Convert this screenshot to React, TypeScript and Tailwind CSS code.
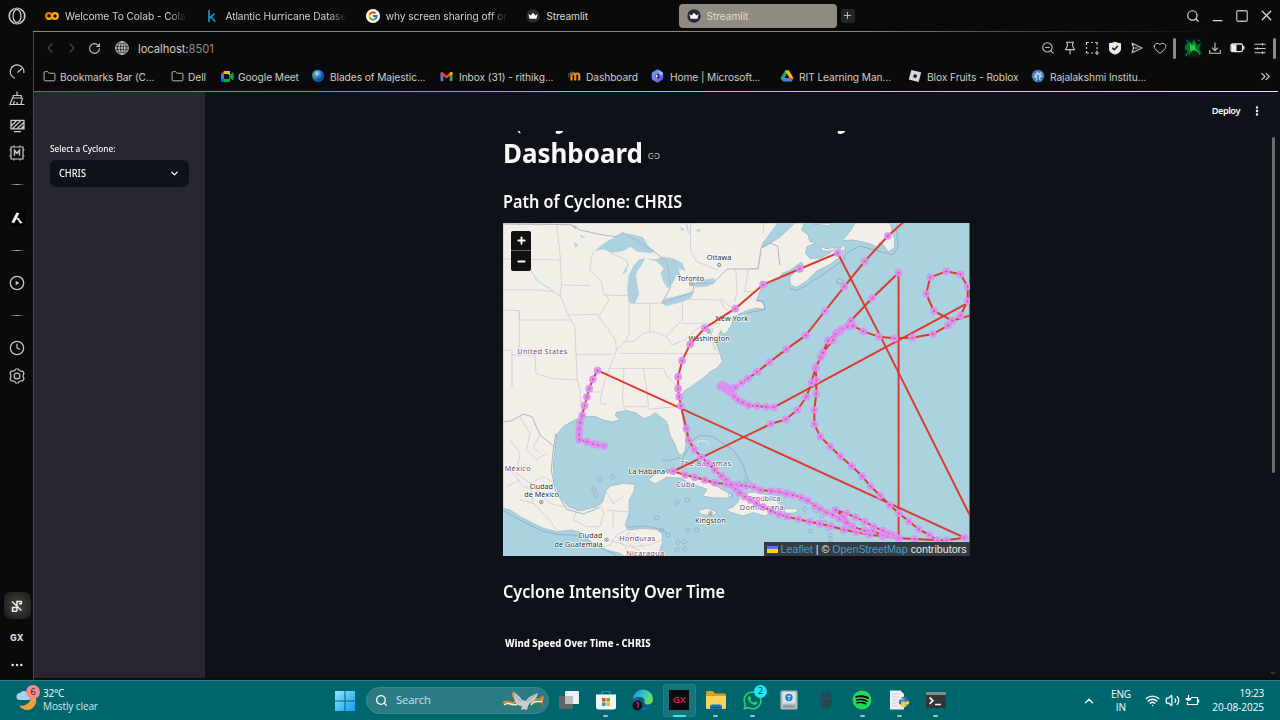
import React from "react";
import {
  Search, Minus, Square, X, ChevronLeft, ChevronRight, RotateCw, ZoomOut, Heart,
  ChevronsRight, ChevronDown, ChevronUp, MoreVertical, Folder, Clock, Wifi, Volume2, Plus,
} from "lucide-react";
import { FaSpotify, FaWhatsapp, FaPython } from "react-icons/fa";
import { FcGoogle } from "react-icons/fc";

type Pt = [number, number];

/* ---------- Brand marks ---------- */

const Colab = () => (
  <svg width="14" height="10" viewBox="0 0 28 20" fill="none" strokeWidth="4.6">
    <circle cx="8" cy="10" r="5.6" stroke="#e8710a" />
    <circle cx="20" cy="10" r="5.6" stroke="#f9ab00" />
    <path d="M4 14a5.6 5.6 0 0 0 8 0" stroke="#f9ab00" />
  </svg>
);

const Kaggle = () => (
  <svg width="14" height="14" viewBox="0 0 14 14" fill="none" stroke="#1f8fc0" strokeWidth="1.7">
    <path d="M4 1v12M9.6 4.6 4.6 9M6.2 7.8l4 5" />
  </svg>
);

const Crown = () => (
  <svg width="14" height="14" viewBox="0 0 14 14">
    <circle cx="7" cy="7" r="6.7" fill="#262a35" />
    <path d="M2.4 5l2.2 1.5L7 3.8l2.4 2.7L11.6 5l-1.2 4.8H3.6z" fill="#fff" />
  </svg>
);

const Meet = () => (
  <svg width="14" height="13" viewBox="0 0 28 26">
    <path d="M2 8 8 2v6z" fill="#ea4335" />
    <path d="M8 2h12v8h-3V8H8z" fill="#fbbc04" />
    <path d="M2 8h6v10H2z" fill="#2684fc" />
    <path d="M2 18h6v6H4a2 2 0 0 1-2-2z" fill="#0066da" />
    <path d="M8 18h9l3-4v8a2 2 0 0 1-2 2H8z" fill="#00ac47" />
    <path d="M18 12l7-7c1-1 2 0 2 1v13c0 1-1 2-2 1l-7-6z" fill="#00ac47" />
  </svg>
);

const Marble = () => (
  <svg width="14" height="14" viewBox="0 0 14 14">
    <defs>
      <radialGradient id="marble" cx=".4" cy=".3">
        <stop offset="0" stopColor="#bfe6ff" />
        <stop offset=".5" stopColor="#3b8ee8" />
        <stop offset="1" stopColor="#174ba8" />
      </radialGradient>
    </defs>
    <circle cx="7" cy="7" r="6.2" fill="url(#marble)" />
    <path d="M1.500 6 3 3l1.500 2L4 8l1 3-2-1z" fill="#5c9e3b" fillOpacity=".8" />
  </svg>
);

const Gmail = () => (
  <svg width="13" height="11" viewBox="0 0 26 20">
    <path d="M1 4v14a1.500 1.500 0 0 0 1.500 1.500H6.500V8z" fill="#4285f4" />
    <path d="M25 4v14a1.500 1.500 0 0 1-1.500 1.500H19.500V8z" fill="#34a853" />
    <path d="M1 3c0-2 2-3 4-1.500L13 8l8-6.500C23 0 25 1 25 3v2L13 14 1 5z" fill="#ea4335" />
    <path d="M19.500 9V3C22 0 25 1 25 3v2z" fill="#fbbc04" />
  </svg>
);

const Moodle = () => (
  <svg width="13" height="10" viewBox="0 0 26 20" fill="none">
    <path d="M7 19V4M7 9a3.700 3.700 0 0 1 7.500 0v10M14.500 9a4 4 0 0 1 8 0v10" stroke="#f08a24" strokeWidth="4.400" />
    <path d="M0 5 9 1l6 2-7 4z" fill="#5b5b5b" />
    <path d="M1.500 5v8" stroke="#777" strokeWidth="1.500" />
  </svg>
);

const M365 = () => (
  <svg width="13" height="14" viewBox="0 0 26 28">
    <defs>
      <linearGradient id="m365" x1="0" y1="0" x2="1" y2="1">
        <stop offset="0" stopColor="#4aa5f5" />
        <stop offset=".45" stopColor="#8f7cf0" />
        <stop offset="1" stopColor="#3f5fe0" />
      </linearGradient>
    </defs>
    <path d="M13 5 20.500 9.500v9L13 23l-7.500-4.500v-9z" fill="none" stroke="url(#m365)" strokeWidth="8" strokeLinejoin="round" />
    <path d="M15 2l8 5v6l-6-3z" fill="#6fd0f2" />
    <path d="M10 11v7l5-4z" fill="#eef" />
  </svg>
);

const Drive = () => (
  <svg width="14" height="12" viewBox="0 0 28 24">
    <path d="M10 1h8l-4 7-8 14-5-6z" fill="#1fa463" />
    <path d="M10 1h8l9 15h-8z" fill="#fbbc04" />
    <path d="M1 16h26l-4 7H6z" fill="#4285f4" />
    <path d="M19 16h8l-4 7z" fill="#ea4335" />
    <path d="M14 9l4 7h-8z" fill="#0a0a0a" />
  </svg>
);

const Roblox = () => (
  <svg width="14" height="14" viewBox="0 0 14 14">
    <path d="M3.300 1 13.200 3.300 10.700 13 .8 10.500z" fill="#d3d7de" />
    <path d="M6 5.300l3 .8-.8 2.900-3-.8z" fill="#15171c" />
  </svg>
);

const College = () => (
  <svg width="14" height="14" viewBox="0 0 14 14">
    <circle cx="7" cy="7" r="6.300" fill="#3b78b8" />
    <path d="M3 4l2 1 1-3 2 2 3-1-1 3 2 1-3 2 1 3-3-2-2 3V9L2 8l2-2z" fill="#a9cdec" />
    <path d="M7 6v7" stroke="#1d3f6e" />
  </svg>
);

const FolderIcon = () => <Folder size={13} strokeWidth={1.700} className="text-[#c9c9c5]" />;

/* ---------- Window chrome ---------- */

const tabs = [
  { icon: <Colab />, text: "Welcome To Colab - Colab" },
  { icon: <Kaggle />, text: "Atlantic Hurricane Datase" },
  { icon: <FcGoogle size={14} className="rounded-full bg-white p-[1.500px]" />, text: "why screen sharing off on" },
  { icon: <Crown />, text: "Streamlit" },
  { icon: <Crown />, text: "Streamlit", active: true },
];

function TabBar() {
  return (
    <div className="flex h-[31px] shrink-0 items-center">
      <div className="flex w-[34px] shrink-0 justify-center">
        <svg width="18" height="18" viewBox="0 0 18 18" fill="none" stroke="#d6d3ca" strokeWidth="1.200">
          <circle cx="9" cy="9" r="8" />
          <ellipse cx="9" cy="9" rx="4" ry="6.600" />
          <path d="M6 2.500a7 7 0 0 0 0 13M12 2.500a7 7 0 0 1 0 13" strokeWidth=".9" />
        </svg>
      </div>
      <div className="ml-[3px] flex gap-[2.400px]">
        {tabs.map((t, i) => (
          <div key={i} className={t.active ? "flex h-6 w-[158px] items-center rounded bg-[#8f8b83] px-2" : "flex h-6 w-[158px] items-center px-2"}>
            <span className="flex w-[14px] shrink-0 justify-center">{t.icon}</span>
            <span
              className={
                i < 3
                  ? "ml-[6px] w-[124px] shrink-0 whitespace-nowrap pt-px text-[10.200px] leading-4 tracking-[-0.080px] text-[#d3d1cb] [mask-image:linear-gradient(to_right,#000_84%,transparent_98%)]"
                  : "ml-[6px] whitespace-nowrap pt-px text-[10.200px] leading-4 tracking-[-0.080px] text-[#dddbd6]"
              }
            >
              {t.text}
            </span>
          </div>
        ))}
      </div>
      <div className="ml-1 flex size-[14px] items-center justify-center rounded-[3px] bg-[#242424] text-[#c9c7c0]">
        <Plus size={11} strokeWidth={2} />
      </div>
      <div className="ml-auto flex items-center text-[#dedbd2]">
        <span className="flex w-[24px] justify-center"><Search size={14} strokeWidth={2} /></span>
        <span className="flex w-[25px] justify-center pt-[10px]"><Minus size={15} strokeWidth={2} /></span>
        <span className="flex w-[24px] justify-center"><Square size={14} strokeWidth={2.200} className="text-[#b5b2a8]" /></span>
        <span className="mr-[2px] flex w-[24px] justify-center"><X size={17} strokeWidth={1.800} /></span>
      </div>
    </div>
  );
}

const Slot = ({ children }: { children: React.ReactNode }) => (
  <span className="flex w-[22.400px] shrink-0 items-center justify-center">{children}</span>
);

function AddressBar() {
  return (
    <div className="flex h-[31px] items-center pt-px text-[#c9c6bd]">
      <span className="ml-[5px] flex w-[22px] justify-center text-[#4c4b48]"><ChevronLeft size={16} strokeWidth={1.600} /></span>
      <span className="flex w-[22px] justify-center text-[#4c4b48]"><ChevronRight size={16} strokeWidth={1.600} /></span>
      <span className="flex w-[22px] justify-center"><RotateCw size={13} strokeWidth={2} /></span>
      <span className="ml-[9px] flex w-[16px] justify-center">
        <svg width="14" height="14" viewBox="0 0 14 14" fill="none" stroke="#cfccc4" strokeWidth="1">
          <circle cx="7" cy="7" r="6.300" />
          <ellipse cx="7" cy="7" rx="3" ry="6.300" />
          <path d="M7 .7v12.600M.7 7h12.600M1.500 4h11M1.500 10h11" />
        </svg>
      </span>
      <span className="ml-2 pt-px text-[11.200px] leading-4 tracking-[-0.050px] text-[#cfcdc7]">localhost:<span className="text-[#8f8d88]">8501</span></span>
      <div className="ml-auto flex items-center">
        <Slot><ZoomOut size={14} strokeWidth={1.800} /></Slot>
        <Slot>
          <svg width="12" height="14" viewBox="0 0 12 14" fill="none" stroke="currentColor" strokeWidth="1.100">
            <path d="M2 1.200h8M3.300 1.200v4L1.500 8.600h9L8.700 5.200v-4M6 8.600v4.800" />
          </svg>
        </Slot>
        <Slot>
          <svg width="14" height="14" viewBox="0 0 14 14" fill="none" stroke="currentColor" strokeWidth="1.200">
            <path d="M1.500 4V1.500H4M6 1.500h2M10 1.500h2V4M12 6v2M1.500 6v2M1.500 10v2H4M6 12h2M12 9.500V14M9.700 12H14" />
          </svg>
        </Slot>
        <Slot>
          <svg width="14" height="14" viewBox="0 0 14 14">
            <path d="M1 2.200Q4 2 7 .8q3 1.200 6 1.400V8c0 3-3 4.600-6 5.600C4 12.600 1 11 1 8z" fill="#ece9df" />
            <path d="M4.200 6.800l2 2 3.700-3.800" fill="none" stroke="#111" strokeWidth="1.300" />
          </svg>
        </Slot>
        <Slot>
          <svg width="12" height="12" viewBox="0 0 12 12" fill="none" stroke="currentColor" strokeWidth="1.100" strokeLinejoin="round">
            <path d="M1 1.200 11 6 1 10.800l1.500-4.800zM2.500 6H7" />
          </svg>
        </Slot>
        <Slot><Heart size={14} strokeWidth={1.700} /></Slot>
        <span className="ml-[2px] h-[21px] w-[3px] rounded-sm bg-[#8f8b83]" />
        <span className="ml-2 mr-[2px] flex">
          <svg width="18" height="20" viewBox="0 0 18 20">
            <rect width="18" height="20" rx="3" fill="#07160c" />
            <path d="M1 8l4-5 2 3 3-5 3 6 4-2-2 6 3 5-5-2-2 4-3-3-4 3 1-5-4-1z" fill="#0b6d2b" />
            <path d="M6 4l2 4 2-3 2 7-3 3-3-4z" fill="#25c94f" />
            <path d="M9 12l4 2 1 5H5z" fill="#08240f" />
            <path d="M2 18c1-4 3-5 5-6M12 11l4 6" stroke="#27b84c" fill="none" />
            <path d="M2 2l3 2M14 3l2-1" stroke="#2466a5" />
          </svg>
        </span>
        <Slot>
          <svg width="12" height="12" viewBox="0 0 12 12" fill="none" stroke="currentColor" strokeWidth="1.100">
            <path d="M6 .5v8M3 5.700l3 3 3-3M.7 8v3.200h10.600V8" />
          </svg>
        </Slot>
        <Slot>
          <svg width="15" height="10" viewBox="0 0 15 10">
            <rect x="1" y="1" width="11.500" height="7.600" rx="1.500" fill="none" stroke="#e4e1d8" strokeWidth="1.300" />
            <path d="M1.500 1.500H6.500v7h-5z" fill="#f4f1e8" />
            <path d="M13.700 3v3.600" stroke="#e4e1d8" strokeWidth="1.400" />
          </svg>
        </Slot>
        <Slot>
          <svg width="12" height="11" viewBox="0 0 12 11" stroke="currentColor" strokeWidth="1.100">
            <path d="M.5 1.200h11M.5 5.500h11M.5 9.800h11M8.500 0v2.400M3.500 4.300v2.400M8.500 8.600V11" />
          </svg>
        </Slot>
        <span className="ml-[2px] mr-[4px] h-[21px] w-[3px] rounded-sm bg-[#8f8b83]" />
      </div>
    </div>
  );
}

const bookmarks = [
  { icon: <FolderIcon />, text: "Bookmarks Bar (C...", cls: "w-[128px] gap-[4px]" },
  { icon: <FolderIcon />, text: "Dell", cls: "w-[49px] gap-[4px]" },
  { icon: <Meet />, text: "Google Meet", cls: "w-[91px] gap-[4px]" },
  { icon: <Marble />, text: "Blades of Majestic...", cls: "w-[129px] gap-[5px]" },
  { icon: <Gmail />, text: "Inbox (31) - rithikg...", cls: "w-[128px] gap-[6px]" },
  { icon: <Moodle />, text: "Dashboard", cls: "w-[83px] gap-[5px]" },
  { icon: <M365 />, text: "Home | Microsoft...", cls: "w-[129px] gap-[6px]" },
  { icon: <Drive />, text: "RIT Learning Man...", cls: "w-[128px] gap-[5px]" },
  { icon: <Roblox />, text: "Blox Fruits - Roblox", cls: "w-[123px] gap-[5px]" },
  { icon: <College />, text: "Rajalakshmi Institu...", cls: "w-[130px] gap-[5px]" },
];

function Bookmarks() {
  return (
    <div className="flex h-[28px] items-center pb-[2px] pl-[9px] text-[10.200px] leading-4 tracking-[-0.080px] text-[#d0cec8]">
      {bookmarks.map((b) => (
        <div key={b.text} className={`flex shrink-0 items-center whitespace-nowrap ${b.cls}`}>
          <span className="shrink-0">{b.icon}</span>
          <span className="pt-px">{b.text}</span>
        </div>
      ))}
      <ChevronsRight size={15} strokeWidth={1.700} className="ml-auto mr-[7px]" />
    </div>
  );
}

const Divider = () => <span className="h-px w-4 bg-linear-to-r from-transparent via-[#b5b2aa] to-transparent" />;

const rail: { h: string; el: React.ReactNode }[] = [
  {
    h: "h-[27px]",
    el: (
      <svg width="16" height="16" viewBox="0 0 16 16" fill="none" stroke="currentColor" strokeWidth="1.200">
        <path d="M6 14.200A6.800 6.800 0 1 1 14.800 9M8.500 8.500 13 4.500" />
      </svg>
    ),
  },
  {
    h: "h-[27px]",
    el: (
      <svg width="16" height="15" viewBox="0 0 16 15" fill="none" stroke="currentColor" strokeWidth="1.200">
        <path d="M8 .5v3.500M4.200 7V4.500h8V7M2.800 7h10.600M3.500 7 1 13.500h11L13.400 7M4.500 13l1-3M8 13.300V11M12.500 13.500h3" />
      </svg>
    ),
  },
  {
    h: "h-[27px]",
    el: (
      <svg width="15" height="14" viewBox="0 0 15 14" fill="none" stroke="currentColor" strokeWidth="1.300">
        <path d="M1 1.300h13v8.500H1zM1 7l6-5.700M2.500 9.500 11 1.500M7 9.800l7-6.500M11 9.800l3-3M4 12.700h7" />
      </svg>
    ),
  },
  {
    h: "h-[27px]",
    el: (
      <svg width="16" height="16" viewBox="0 0 16 16" fill="none" stroke="currentColor" strokeWidth="1.200">
        <path d="M2 2h12v12H2zM.5 5H2M.5 11H2M14 5h1.500M14 11h1.500M5 .5V2M11 .5V2M5 14v1.500M11 14v1.500" />
        <path d="M5.500 10.800V5.300L8 8.300l2.500-3v5.500" strokeWidth="1.400" />
      </svg>
    ),
  },
  { h: "h-[37px]", el: <Divider /> },
  {
    h: "h-[30px]",
    el: (
      <span className="flex size-4 items-center justify-center rounded-sm bg-black">
        <svg width="12" height="12" viewBox="0 0 12 12" fill="#f3f1ea">
          <path d="M5.500 .5 8.300 1.300 3.200 11.300 .4 10.300zM6.300 5.500 9 7l-1 1.500-2.500-1zM8.200 7.500l3.300 3-2 1.200-2.500-3z" />
        </svg>
      </span>
    ),
  },
  { h: "h-[34px]", el: <Divider /> },
  {
    h: "h-[32px]",
    el: (
      <svg width="16" height="16" viewBox="0 0 16 16" fill="none" stroke="currentColor" strokeWidth="1.300">
        <circle cx="8" cy="8" r="6.700" />
        <path d="M6.700 5.800 10.300 8l-3.600 2.200z" fill="currentColor" stroke="none" />
      </svg>
    ),
  },
  { h: "h-[32px]", el: <Divider /> },
  { h: "h-[34px]", el: <Clock size={16} strokeWidth={1.800} /> },
  {
    h: "h-[22px]",
    el: (
      <svg width="16" height="16" viewBox="0 0 16 16" fill="none" stroke="currentColor" strokeWidth="1.200" strokeLinejoin="round">
        <path d="M6.800 1h2.400l1 1.500 2 .7 1.700.1 1.100 2.100-.8 1.500v2.200l.8 1.500-1.100 2.100-1.700.1-2 .7-1 1.500H6.800l-1-1.500-2-.7-1.700-.1L1 10.600l.8-1.500V6.900L1 5.400l1.100-2.100 1.700-.1 2-.7z" />
        <circle cx="8" cy="8" r="2.900" />
      </svg>
    ),
  },
];

function Rail() {
  return (
    <div className="flex w-[33px] shrink-0 flex-col items-center pl-px pt-[27px] text-[#cdcac0]">
      {rail.map((r, i) => (
        <div key={i} className={`flex shrink-0 items-center justify-center ${r.h}`}>{r.el}</div>
      ))}
      <div className="mt-auto flex size-[27px] items-center justify-center rounded-md bg-[radial-gradient(#47453f,#171716)]">
        <svg width="12" height="12" viewBox="0 0 12 12" fill="none" stroke="#f0ede4" strokeWidth="1.500">
          <path d="M6 11V1.500h4.500M10.300 .8v3H8M5.500 7.500H1.500v3.700H6M1 1.500l9.500 9" />
        </svg>
      </div>
      <div className="mt-[11px] h-[16px] text-[9px] font-extrabold leading-[16px] tracking-[0.200px] text-[#dad7ce]">GX</div>
      <svg className="mt-[16px]" width="12" height="6" viewBox="0 0 12 6" fill="#e8e6df">
        <circle cx="1.700" cy="3" r="1.250" />
        <circle cx="6" cy="3" r="1.250" />
        <circle cx="10.300" cy="3" r="1.250" />
      </svg>
      <div className="h-[12px]" />
    </div>
  );
}

/* ---------- Map (three map units per pixel) ---------- */

const land = [
  "M9 9H835L812 40 790 70 785 84 802 76 842 50 885 9H915L906 30 926 45 930 64 948 70 922 80 918 100 932 116 962 114 990 100 1008 84 1030 86 1026 108 990 134 950 154 922 182 892 202 872 196 870 172 890 150 912 134 904 126 884 142 868 152 848 160 838 176 818 188 798 196 784 206 776 228 770 242 784 244 796 258 790 268 772 264 742 272 718 282 700 292 697 312 684 334 670 345 664 332 656 345 662 362 650 372 660 398 668 425 652 444 630 456 608 476 574 500 552 514 542 545 546 578 553 620 560 660 556 692 545 706 534 698 524 670 510 645 505 622 500 604 480 590 466 578 450 590 430 596 410 580 382 572 350 577 346 586 360 600 336 606 310 600 284 589 250 590 220 602 190 620 170 645 165 690 160 740 165 790 180 830 205 860 240 872 290 860 308 846 318 812 330 798 370 790 406 793 402 815 388 840 388 880 376 915 384 930 430 925 470 928 488 940 487 970 475 1008H372L360 1000 320 990 270 965 245 938 215 930 170 935 130 925 90 905 60 890 30 870 9 865Z",
  "M1028 62 1040 48 1056 26 1066 9H1172L1178 36 1186 60 1184 84 1166 96 1152 76 1140 68 1132 82 1118 74 1090 66 1060 60Z",
  "M958 78 980 86 1006 82 1000 92 970 94Z M940 12 1000 10 985 18Z M702 292 742 280 730 292Z M1018 92 1032 72 1038 90Z",
  "M444 780 464 764 490 756 530 751 580 768 640 793 696 824 690 834 640 834 608 828 622 808 580 794 540 774 500 772 466 792Z",
  "M682 868 700 860 716 844 724 820 760 816 810 826 836 848 852 864 820 874 796 888 760 878 730 888 690 876Z",
  "M854 866H890L896 874 880 880H856Z",
  "M594 872 622 864 652 876 642 886 606 884Z",
];

const lakes =
  "M283 93 318 66 346 50 370 38 402 44 430 52 444 76 466 95 450 99 412 95 392 80 372 92 354 96 334 98 312 88Z M385 246 382 208 386 168 400 138 418 118 436 114 426 136 414 150 408 166 412 192 418 222 404 251Z M366 165 384 132 380 155Z M438 116 468 118 490 110 524 116 548 130 558 154 536 146 546 178 530 166 520 188 504 206 490 184 482 158 492 146 470 124Z M482 248 496 236 530 228 560 220 582 216 574 234 546 246 500 259Z M575 194 600 180 644 174 646 188 620 200 590 202Z M212 14 232 18 226 28Z M240 44 256 50 246 54Z M222 66 236 76 226 82Z M540 22 556 28 546 34Z M588 30 602 26 598 38Z";

const borders =
  "M170 14 180 100 185 195 180 222 205 285 225 320 228 400 232 480 240 510 246 590M9 210H115L160 215 185 232M9 117 182 120M185 195 272 197M9 270 58 272V300H217M205 285 297 283M283 93 274 112 270 150 304 184 310 216 328 240 310 266 297 292 320 320 346 360 350 390 335 430 318 472 306 516 300 550M330 98 380 120 386 142M310 225 383 227M388 250V340L376 364 350 390M388 250H480M450 250V338M376 366 402 364 430 340 460 335 500 350 520 326 548 300V240M548 310H660M565 238 670 240 692 262M228 403H335M360 400 660 402M325 445H490L502 470 545 510M9 390H36V405H105L108 460 160 476 232 480M36 405V504M500 350 516 375 555 360 586 330 614 312M372 445 368 540 376 574M430 447 440 500 446 560M375 560H440L446 568 530 560M306 516H262M320 552H300M58 272V400M705 246 712 215 708 147M730 215H770M735 215 745 150M572 9 572 90 590 125 655 150M790 9 792 40M745 147 775 146 784 100M399 150 396 240M660 240 675 265 700 280M60 590 90 640 80 690 110 720 140 700M30 660 60 700 50 760 90 790 130 770 165 790M9 740 40 760 70 800 110 810 150 850 200 862M120 645 100 680 120 700M60 840 100 850 140 890 170 930M230 872 220 900 260 920 300 920 312 880 300 850M318 870 388 876M340 870V920M380 930 350 945 330 975 300 985M390 935 370 960 400 980 450 975 485 960M330 960 420 990 M350 950 390 1000 M400 940 430 985M310 800 340 850 370 830M20 800 60 780M90 790 100 850";

const nationalBorders =
  "M9 12 215 14 240 30 310 45 346 50 370 38 440 80 464 96 500 124 507 152 512 202 486 250 580 216 582 190 640 190 682 147H745L775 146 784 84 806 68 834 78 840 136M9 606 35 602 70 582 96 590 120 645 168 684";

const shelf =
  "M545 720 580 660 600 646 640 650 700 690 730 735 745 780 780 812M870 204 890 212 930 190 990 150 1030 122 1040 100 1080 78 1130 92 1180 104 1196 80 1190 20M770 240 792 244 796 268 740 280M1010 182 1022 174 1032 182 1028 190 1012 190Z M486 718 510 722 540 712M9 872 60 900 130 934 180 944 240 946 300 982 350 1006M168 640 160 690 154 750 166 810 200 868 250 882 300 862M384 922 440 918 490 930 500 940";

const islets: Pt[] = [[300, 779], [338, 771], [282, 809], [288, 826], [531, 847], [562, 839], [471, 893], [564, 932], [592, 930], [535, 967], [553, 965], [531, 990], [555, 987], [486, 930], [504, 944], [932, 934], [950, 872], [966, 888], [974, 908], [982, 926], [992, 946], [992, 958], [915, 868], [720, 790], [738, 780], [692, 826], [712, 812]];

const tracks: Pt[][] = [
  [[313, 678], [294, 675], [280, 672], [262, 665], [238, 659], [237, 643], [238, 628], [240, 608], [247, 587], [254, 557], [261, 531], [268, 506], [279, 478], [293, 451], [1395, 953], [1341, 961], [1313, 961], [1245, 957], [1199, 955], [1150, 949], [1110, 944], [1070, 937], [1033, 929], [993, 919], [960, 911], [929, 905], [896, 898], [862, 890], [838, 883], [814, 873], [790, 861], [770, 850], [752, 840], [735, 830], [720, 818], [707, 806], [694, 794], [680, 780], [665, 768], [645, 750], [625, 730], [605, 711], [583, 688], [567, 661], [560, 626], [543, 558], [538, 530], [535, 506], [535, 470], [547, 422], [571, 373], [615, 324], [706, 266], [790, 194], [900, 147], [1014, 99], [1144, 352], [1440, 944]],
  [[1313, 961], [1290, 945], [1258, 928], [1228, 904], [1198, 880], [1170, 855], [1142, 827], [1113, 799], [1088, 769], [1056, 738], [1022, 709], [992, 680], [962, 650], [944, 613], [944, 570], [950, 521], [950, 480], [948, 443], [963, 412], [985, 362], [1008, 341], [1026, 327], [1053, 303], [1118, 234], [1197, 158], [1197, 955], [1180, 946], [1150, 932], [1122, 920], [1095, 905], [1069, 892], [1040, 880], [1007, 870], [1032, 890], [1058, 920]],
  [[1170, 942], [1148, 946], [1120, 932], [1095, 932], [1058, 920], [1040, 908], [1020, 896], [1000, 885], [980, 877], [962, 867], [945, 857], [925, 842], [905, 833], [880, 825], [860, 821], [838, 815], [815, 813], [782, 810], [762, 801], [738, 798], [712, 796], [680, 792], [645, 788], [615, 780], [585, 772], [556, 765], [520, 754], [813, 612], [858, 598], [893, 570], [920, 531], [935, 489], [948, 443], [970, 398], [1000, 360], [1020, 335], [1043, 320], [1060, 317], [1091, 334], [1137, 350], [1185, 355], [1238, 353], [1300, 342], [1345, 317], [1383, 287], [1404, 243], [1405, 200], [1383, 163], [1340, 154], [1292, 172], [1280, 222], [1303, 273], [1358, 302], [1420, 284]],
  [[1420, 241], [822, 562], [800, 561], [772, 558], [747, 556], [729, 547], [715, 540], [703, 528], [694, 518], [684, 514], [692, 508], [678, 508], [672, 502], [662, 500], [668, 494], [676, 498], [688, 505], [708, 502], [725, 489], [745, 475], [772, 456], [809, 427], [860, 388], [918, 346], [976, 273], [1034, 200], [1095, 124], [1165, 48], [1212, 6]],
];

const path = (pts: Pt[]) => "M" + pts.map((p) => p.join(" ")).join("L");
const isMarker = ([x, y]: Pt) => x < 1410 && y > 9 && !(x === 1144 && y === 352);

const labels: [string, number, number, number, boolean?][] = [
  ["Ottawa", 658, 121, 74],
  ["Toronto", 573, 182, 80],
  ["New York", 696, 303, 98],
  ["Washington", 628, 363, 124],
  ["United States", 127, 401, 150, true],
  ["México", 53, 752, 78, true],
  ["Ciudad", 124, 806, 70],
  ["de México", 125, 832, 104],
  ["La Habana", 441, 762, 110],
  ["Cuba", 557, 802, 56, true],
  ["The Bahamas", 618, 738, 152, true],
  ["Kingston", 632, 909, 92],
  ["República", 792, 842, 100, true],
  ["Dominicana", 786, 869, 132, true],
  ["Ciudad", 271, 953, 72],
  ["de Guatemala", 236, 980, 144],
  ["Honduras", 412, 962, 108, true],
  ["Nicaragua", 436, 1008, 114, true],
];

const towns: Pt[] = [[658, 135], [574, 191], [627, 335], [124, 846], [505, 754], [632, 880], [320, 959]];

function CycloneMap() {
  return (
    <svg className="block h-full w-full" viewBox="9 9 1401 999" preserveAspectRatio="none">
      <rect x="9" y="9" width="1401" height="999" fill="#aad3df" />
      {land.map((d) => (
        <path key={d} d={d} fill="#f2efe9" stroke="#9db9c9" strokeWidth="2.500" strokeLinejoin="round" />
      ))}
      <path d={lakes} fill="#aad3df" />
      <path d="M560 9 566 40M92 150 110 180 160 214M652 350 640 372 648 390M614 330 640 326 632 350" fill="none" stroke="#aad3df" strokeWidth="3" />
      <path d={borders} fill="none" stroke="#d2c3d0" strokeWidth="2.200" />
      <path d={nationalBorders} fill="none" stroke="#bfadc2" strokeWidth="3" strokeLinejoin="round" />
      <path d={shelf} fill="none" stroke="#93a6c4" strokeWidth="2.500" strokeLinejoin="round" />
      {islets.map(([x, y]) => (
        <circle key={`${x}-${y}`} cx={x} cy={y} r="6.500" fill="none" stroke="#8fa6c2" strokeWidth="2" />
      ))}
      <path d="M588 668 600 662 620 664 628 676M592 680 596 672" fill="none" stroke="#e8efe9" strokeWidth="3" />
      {towns.map(([x, y]) => (
        <g key={`${x}-${y}`}>
          <circle cx={x} cy={y} r="5" fill="#fff" stroke="#444" strokeWidth="1.800" />
          <circle cx={x} cy={y} r="1.600" fill="#333" />
        </g>
      ))}
      {labels.map(([t, x, y, w, country]) => (
        <text
          key={t + y} x={x} y={y} textLength={w} textAnchor="middle" fontSize="22"
          fill={country ? "#6d4a72" : "#2c2c2c"} stroke="#fff" strokeOpacity=".75" strokeWidth="5" paintOrder="stroke"
          className="font-['Noto_Sans',sans-serif]"
        >
          {t}
        </text>
      ))}
      {tracks.map((t, i) => (
        <path key={i} d={path(t)} fill="none" stroke="#dd3a31" strokeWidth="6" strokeLinejoin="round" />
      ))}
      {tracks.flatMap((t, i) =>
        t.filter(isMarker).map(([x, y], j) => (
          <circle
            key={`${i}-${j}`} cx={x} cy={y} r="7.500" fill="#dc8ff5" fillOpacity=".4"
            stroke="#dc8ff5" strokeOpacity=".92" strokeWidth="8"
          />
        )),
      )}
      <path d="M654 496Q658 486 672 488L696 500 706 514 694 524 680 518 660 506Z" fill="#d992f4" />
    </svg>
  );
}

/* ---------- Streamlit page ---------- */

function Page() {
  return (
    <div className="flex h-[586px] overflow-hidden bg-[#0e1117] font-['Noto_Sans','Open_Sans',sans-serif] text-[#fafafa]">
      <aside className="w-[171px] shrink-0 bg-[#262730] px-4 pt-[50px]">
        <div className="h-[14px] origin-left scale-x-[0.860] whitespace-nowrap text-[9.600px] font-medium leading-[14px]">Select a Cyclone:</div>
        <div className="mt-[4px] flex h-[27px] w-[139px] items-center justify-between rounded-md bg-[#0e1117] px-[9px]">
          <span className="origin-left scale-x-[0.880] text-[10.500px] font-medium">CHRIS</span>
          <ChevronDown size={11} strokeWidth={3} />
        </div>
      </aside>
      <div className="flex min-w-0 flex-1 flex-col">
        <header className="flex h-[39px] shrink-0 items-center justify-end pb-[2px] pr-[6px]">
          <span className="mr-[11px] text-[9.200px] font-semibold tracking-[-0.450px]">Deploy</span>
          <MoreVertical size={12} strokeWidth={3} />
        </header>
        <main className="ml-[298px] flex w-[467px] flex-1 flex-col overflow-hidden">
          <svg className="shrink-0" width="467" height="4" viewBox="0 0 467 4" fill="#fafafa">
            <path d="M14.500 0h2l1.300 2.300h-1.500zM53 0h7.500Q58.500 3 56 3 53.500 3 52.500 2zM335 0h7.500Q340.500 3 338 3 335.500 3 334.500 2z" />
          </svg>
          <div className="flex h-[35px] items-center">
            <h1 className="w-[145px] origin-left scale-x-[0.960] whitespace-nowrap text-[27px] font-bold leading-[35px]">Dashboard</h1>
            <svg className="mt-[7px]" width="12" height="8" viewBox="0 0 12 8" fill="none" stroke="#a3a5aa" strokeWidth="1.100">
              <path d="M5.200 1.500H3.200a2.500 2.500 0 0 0 0 5h2M6.800 1.500h2a2.500 2.500 0 0 1 0 5h-2M3.800 4h4.400" />
            </svg>
          </div>
          <h2 className="mt-[18px] h-[26px] origin-left scale-x-[0.900] whitespace-nowrap text-[18px] font-semibold leading-[26px]">Path of Cyclone: CHRIS</h2>
          <div className="relative mt-[9px] h-[333px] w-[466.500px] shrink-0 overflow-hidden">
            <CycloneMap />
            <div className="absolute left-[8px] top-[8px] flex w-5 flex-col rounded-[2px] bg-[#111] text-white">
              <span className="flex h-5 items-center justify-center border-b border-[#666]"><Plus size={11} strokeWidth={4} /></span>
              <span className="flex h-5 items-center justify-center"><Minus size={11} strokeWidth={4} /></span>
            </div>
            <div className="absolute bottom-0 right-0 flex h-[14px] items-center whitespace-nowrap bg-[#262c30]/90 pl-[3px] pr-[3px] font-['Liberation_Sans',sans-serif] text-[10.700px] text-[#ececec]">
              <span className="mr-[3px] flex h-[7px] w-[11px] flex-col">
                <span className="h-1/2 bg-[#4c7be1]" />
                <span className="h-1/2 bg-[#ffd500]" />
              </span>
              <span className="whitespace-pre"><span className="text-[#4c9ccb]">Leaflet</span> | © <span className="text-[#4c9ccb]">OpenStreetMap</span> contributors</span>
            </div>
          </div>
          <h2 className="mt-[22px] h-[26px] origin-left scale-x-[0.900] whitespace-nowrap text-[18px] font-semibold leading-[26px]">Cyclone Intensity Over Time</h2>
          <div className="ml-[2px] mt-[31px] h-[16px] origin-left scale-x-[0.900] whitespace-nowrap text-[10.600px] font-extrabold leading-[16px]">Wind Speed Over Time - CHRIS</div>
        </main>
      </div>
      <div className="mr-[3px] flex w-[8px] shrink-0 flex-col items-center pt-[45px]">
        <div className="h-[336px] w-[3px] rounded-full bg-[#6b6b70]" />
        <ChevronDown size={6} strokeWidth={3} className="mb-[2px] mt-auto text-[#777]" />
      </div>
    </div>
  );
}

/* ---------- Taskbar ---------- */

const apps: { el: React.ReactNode; run?: boolean; active?: boolean }[] = [
  {
    el: (
      <svg width="22" height="20" viewBox="0 0 22 20">
        <rect x="7" y="1" width="14" height="13" rx="1" fill="#eef2f3" />
        <rect x="1" y="6" width="14" height="13" rx="1" fill="#5f6668" />
        <rect x="7" y="6" width="8" height="8" fill="#b9bfc1" />
      </svg>
    ),
  },
  {
    run: true,
    el: (
      <svg width="20" height="20" viewBox="0 0 20 20">
        <path d="M6 5V1.500h8V5" fill="none" stroke="#1f9fd9" strokeWidth="1.200" />
        <path d="M0 4.500h20V17a2.500 2.500 0 0 1-2.500 2.500h-15A2.500 2.500 0 0 1 0 17z" fill="#f4f6f7" />
        <path d="M6 8h3.600v3.600H6z" fill="#f04e1f" /><path d="M10.400 8H14v3.600h-3.600z" fill="#7fba00" />
        <path d="M6 12.400h3.600V16H6z" fill="#1ba1e2" /><path d="M10.400 12.400H14V16h-3.600z" fill="#ffb900" />
      </svg>
    ),
  },
  {
    el: (
      <svg width="22" height="22" viewBox="0 0 22 22">
        <defs>
          <linearGradient id="edge" x1="0" y1="0" x2="1" y2=".4">
            <stop offset="0" stopColor="#1b8fdc" /><stop offset=".6" stopColor="#36c6c9" /><stop offset="1" stopColor="#6fdc5c" />
          </linearGradient>
        </defs>
        <path d="M1 11A10 10 0 0 1 21 10c0 4-3 5.500-5.500 5.500S12 14 12.500 12.500C13 11 12 8 8.500 8S1 9 1 11z" fill="url(#edge)" />
        <path d="M1 11c0-2 3-3.500 6.500-3-3 1.500-3 6 0 9 3 2.500 7 2.500 11 .5A10 10 0 0 1 1 11z" fill="#1464b8" />
        <circle cx="5.500" cy="16.500" r="5" fill="#14101a" />
        <path d="M4 14q3-1 2.500 1.500T6 19" stroke="#d02a72" fill="none" strokeWidth="1.200" />
      </svg>
    ),
  },
  {
    run: true,
    active: true,
    el: <span className="flex size-5 items-center justify-center bg-[#0c0c0e] text-[9.500px] font-semibold tracking-[-0.200px] text-[#e0244b]">GX</span>,
  },
  {
    run: true,
    el: (
      <svg width="20" height="20" viewBox="0 0 20 20">
        <path d="M0 2.500A1.500 1.500 0 0 1 1.500 1H7l2 2.500h9.500A1.500 1.500 0 0 1 20 5v3H0z" fill="#d9a021" />
        <path d="M0 6h20v11.500a1.500 1.500 0 0 1-1.500 1.500h-17A1.500 1.500 0 0 1 0 17.500z" fill="#fdd15a" />
        <path d="M4 19v-2.500A2 2 0 0 1 6 14.500h8a2 2 0 0 1 2 2V19z" fill="#1673c4" />
        <path d="M6.500 17.500h7" stroke="#0d4a86" />
      </svg>
    ),
  },
  {
    run: true,
    el: (
      <span className="relative flex">
        <FaWhatsapp size={21} color="#2ad466" />
        <span className="absolute -right-[4px] -top-[5px] flex size-[13px] items-center justify-center rounded-full bg-[#1de7f2] text-[9px] text-[#063a40]">2</span>
      </span>
    ),
  },
  {
    el: (
      <svg width="18" height="20" viewBox="0 0 18 20">
        <rect x=".5" y=".5" width="17" height="19" rx="1.500" fill="#b4b9be" />
        <rect x="2.500" y="2" width="13" height="11.500" fill="#dfe3e6" />
        <circle cx="9" cy="7.500" r="3.700" fill="#1f7fd0" />
        <path d="M9 5v5M7.500 6.500h3" stroke="#bfe2ff" />
        <path d="M3 16.500h12" stroke="#8b9095" strokeWidth="2" />
      </svg>
    ),
  },
  {
    el: (
      <svg width="12" height="18" viewBox="0 0 12 18" fill="#27484c">
        <path d="M.5 7V5.500A5 5 0 0 1 5.500 1v6zM6.500 7V1a5 5 0 0 1 5 4.500V7zM.5 8h11v4.500a5.500 5 0 0 1-11 0z" />
      </svg>
    ),
  },
  { run: true, el: <span className="flex rounded-full bg-black"><FaSpotify size={20} color="#1ed760" /></span> },
  {
    run: true,
    el: (
      <span className="relative flex">
        <svg width="20" height="20" viewBox="0 0 20 20">
          <path d="M1 .5h10.500L15 4v15.500H1z" fill="#eef0f0" />
          <path d="M3 4h7M3 7h8M3 10h6M3 13h5M3 16h5" stroke="#cdd1d2" strokeWidth="1.200" />
        </svg>
        <span className="absolute bottom-[2px] right-[-1px]"><FaPython size={12} color="#3d7ab5" /></span>
        <span className="absolute bottom-[2px] right-[-1px] [clip-path:inset(45%_0_0_25%)]"><FaPython size={12} color="#ffd343" /></span>
      </span>
    ),
  },
  {
    run: true,
    el: (
      <svg width="20" height="16" viewBox="0 0 20 16">
        <rect width="20" height="16" rx="1" fill="#333436" />
        <rect width="20" height="3" fill="#85898c" />
        <path d="M3.500 5.500 7 8.700l-3.500 3.200M9 12.500h6" fill="none" stroke="#f2f2f2" strokeWidth="1.700" />
      </svg>
    ),
  },
];

function Taskbar() {
  return (
    <div className="flex h-10 shrink-0 items-center border-t border-[#2b7f86] bg-[#00666e] font-['Open_Sans','Noto_Sans',sans-serif] text-white">
      <div className="flex w-[330px] items-center pb-px pl-[16px]">
        <span className="relative flex">
          <svg width="24" height="24" viewBox="0 0 24 24">
            <path d="M19 8a8.500 8.500 0 1 1-16 9.500 9.500 9.500 0 0 0 12-8.500z" fill="#f0a23c" />
            <path d="M4 12a3.500 3.500 0 0 1 0-7A4.500 4.500 0 0 1 12 6a3 3 0 0 1 0 6z" fill="#a9d2f5" />
          </svg>
          <span className="absolute -top-[3px] left-[10px] flex size-[14px] items-center justify-center rounded-full bg-[#f58b92] text-[9px] text-[#3a1216]">6</span>
        </span>
        <div className="ml-[3px] text-[10px] leading-[13.500px]">
          <div className="tracking-[-0.200px]">32°C</div>
          <div className="whitespace-nowrap tracking-[-0.100px] text-[#d5e8ea]">Mostly clear</div>
        </div>
      </div>
      <span className="flex w-[30px] justify-center">
        <svg width="20" height="20" viewBox="0 0 20 20">
          <defs>
            <linearGradient id="win" x1="0" y1="0" x2="1" y2="1">
              <stop offset="0" stopColor="#8fe3ff" /><stop offset="1" stopColor="#0f9df5" />
            </linearGradient>
          </defs>
          <path d="M0 0h9.500v9.500H0zM10.500 0H20v9.500h-9.500zM0 10.500h9.500V20H0zM10.500 10.500H20V20h-9.500z" fill="url(#win)" />
        </svg>
      </span>
      <div className="ml-[6px] flex h-[27px] w-[183px] items-center rounded-full border border-[#3d8b92] bg-[#2a7b83] pl-[8px] pr-[3px]">
        <Search size={13} strokeWidth={2.400} />
        <span className="ml-[8px] text-[11.200px] tracking-[-0.100px] text-[#cfe3e5]">Search</span>
        <svg className="ml-auto" width="43" height="22" viewBox="0 0 43 22" fill="none">
          <path d="M1 13c5-5 8 3 12-1s-6-5-1-10" stroke="#e98a2b" strokeWidth="1.800" />
          <path d="M2 15c5-5 9 3 13-1" stroke="#f3f3f0" strokeWidth="1.500" />
          <path d="M3 17c5-4 9 2 13-1" stroke="#2f8a3c" strokeWidth="1.500" />
          <path d="M29 13c4-6 7-2 11-5M40 6c3 3-3 5 1 9" stroke="#e98a2b" strokeWidth="1.800" />
          <path d="M29 15c4-6 7-2 11-4" stroke="#f3f3f0" strokeWidth="1.500" />
          <path d="M30 17c4-6 6-2 11-3" stroke="#2f8a3c" strokeWidth="1.500" />
          <path d="M12 2c3 3 6 4 8 8l4 1c2-4 7-6 12-8-1 5-4 8-8 10l-2 3-1 4-3-1-3 1 1-4c-3 0-5-1-6-3-2-3-2-7-2-11z" fill="#c9cdd0" />
          <path d="M13 5l6 7M33 5l-8 7" stroke="#8f979b" strokeWidth=".8" />
        </svg>
      </div>
      <div className="ml-[2px] flex">
        {apps.map((a, i) => (
          <div key={i} className="relative flex h-[33px] w-[36.650px] items-center justify-center">
            {a.active && <span className="absolute inset-x-[2px] inset-y-0 rounded-[3px] border border-[#2b7d84] bg-[#16747b]" />}
            <span className="relative -top-[0.500px] flex">{a.el}</span>
            {a.run && (
              <span className={a.active ? "absolute bottom-0 h-[2.500px] w-[13px] rounded-full bg-[#3de6f5]" : "absolute bottom-0 h-[2.500px] w-[5px] rounded-full bg-[#a3c3c6]"} />
            )}
          </div>
        ))}
      </div>
      <div className="ml-auto flex items-center pr-4 text-[10px]">
        <ChevronUp size={14} strokeWidth={2.200} />
        <div className="ml-[15px] w-[20px] text-center leading-[13px]">
          <div className="tracking-[-0.200px]">ENG</div>
          <div>IN</div>
        </div>
        <Wifi size={15} strokeWidth={2.200} className="ml-[14px]" />
        <Volume2 size={15} strokeWidth={2} className="ml-[5px]" />
        <svg className="ml-[5px]" width="15" height="13" viewBox="0 0 15 13" fill="none" stroke="#fff" strokeWidth="1.200">
          <path d="M6 3.500h6.500v7h-10V8M13.700 5.500v3" />
          <path d="M3.500 1v5.500M1 4c0 3 5 3 5 0" fill="#fff" />
        </svg>
        <div className="ml-[11px] w-[53px] text-right leading-[13.500px]">
          <div className="tracking-[-0.200px]">19:23</div>
          <div className="-ml-3 whitespace-nowrap tracking-[-0.050px]">20-08-2025</div>
        </div>
      </div>
    </div>
  );
}

export default function App() {
  return (
    <div className="flex h-[720px] w-[1280px] flex-col overflow-hidden bg-[#0a0a0a] font-['Inter',sans-serif]">
      <TabBar />
      <div className="flex h-[649px] shrink-0">
        <Rail />
        <div className="flex w-[1247px] flex-col">
          <div className="h-px shrink-0 bg-linear-to-r from-[#8b887b] from-65% to-[#0a0a0a] to-95%" />
          <div className="flex flex-1 flex-col border-l border-[#4a4943]">
            <AddressBar />
            <Bookmarks />
            <div className="h-px w-[1244px] shrink-0 bg-linear-to-r from-[#c9403a] via-[#e9a45c] to-[#f2ec7c]" />
            <Page />
          </div>
        </div>
      </div>
      <Taskbar />
    </div>
  );
}
